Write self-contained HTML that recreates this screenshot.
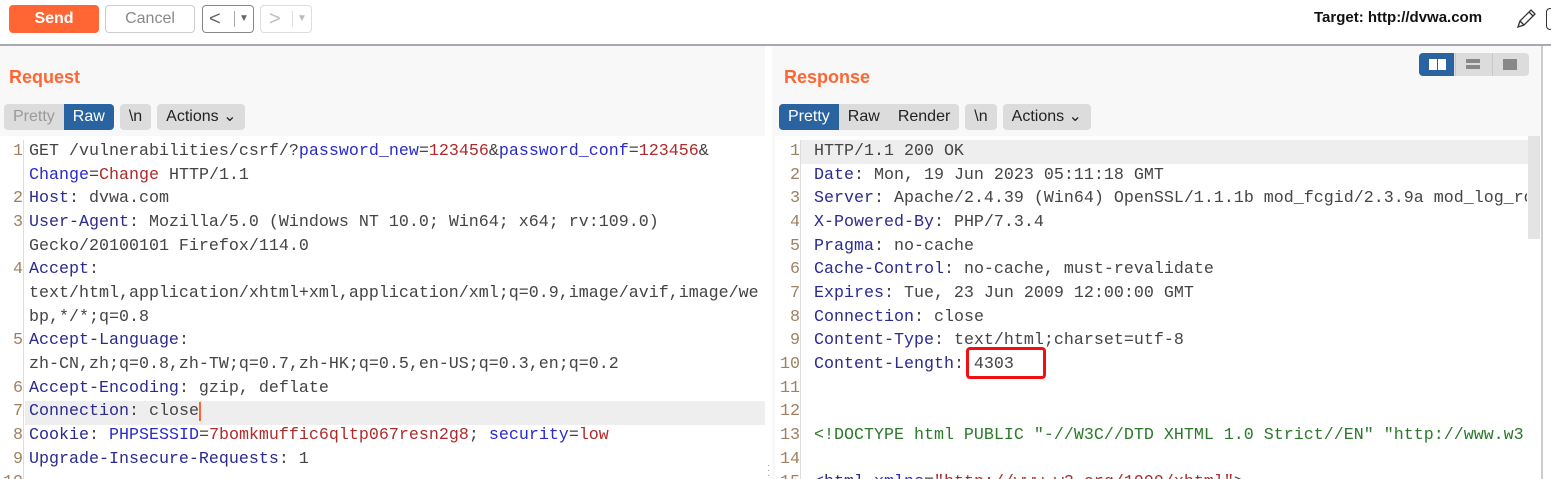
<!DOCTYPE html>
<html style="width:1551px;height:479px;overflow:hidden"><head><meta charset="utf-8"><style>
*{margin:0;padding:0;box-sizing:border-box}
body{width:1551px;height:479px;overflow:hidden;background:#fff;font-family:"Liberation Sans",sans-serif;position:relative}
.abs{position:absolute}
.btn{position:absolute;border-radius:4px;font-size:16px;text-align:center}
.panel{position:absolute;top:46px;height:433px;background:#f8f8f8;overflow:hidden}
.title{position:absolute;top:21px;left:9px;color:#ff6633;font-weight:bold;font-size:18px}
.tabs{position:absolute;top:58px;height:26px;font-size:16px;display:flex;gap:6px}
.grp{display:flex;background:#dcdcdc;border-radius:4px;overflow:hidden}
.grp span{padding:0 9px;line-height:26px;color:#222}
.grp span.on{background:#2a64a0;color:#fff}
.code{position:absolute;top:90px;bottom:0;background:#fff;font-family:"Liberation Mono",monospace;font-size:16.67px;color:#444;overflow:hidden}
.ln{position:absolute;left:0;top:4px;width:24px;text-align:right;color:#a08060;border-right:1px solid #ddd;height:340px}
.ln div,.tx div{height:23.67px;line-height:23.67px}
.tx{position:absolute;left:29px;top:4px;white-space:pre}
.k{color:#2a2a90}.p{color:#2a2acc}.v{color:#b02a2a}.g{color:#2a7a2a}
</style></head><body>
<div class="btn" style="left:9px;top:5px;width:90px;height:28px;background:#ff6633;color:#fff;font-weight:bold;line-height:28px">Send</div>
<div class="btn" style="left:105px;top:5px;width:90px;height:28px;border:1px solid #ccc;color:#888;line-height:26px">Cancel</div>
<div class="btn" style="left:202px;top:5px;width:52px;height:28px;border:1px solid #888;color:#666;line-height:26px;font-size:20px;text-align:left;padding-left:6px">&lt;<span style="position:absolute;left:31px;top:5px;height:16px;border-left:1px solid #aaa"></span><span style="position:absolute;left:36px;top:0;font-size:10px">▼</span></div>
<div class="btn" style="left:260px;top:5px;width:52px;height:28px;border:1px solid #ddd;color:#bbb;line-height:26px;font-size:20px;text-align:left;padding-left:8px">&gt;<span style="position:absolute;left:31px;top:5px;height:16px;border-left:1px solid #ddd"></span><span style="position:absolute;left:36px;top:0;font-size:10px">▼</span></div>
<div class="abs" style="left:1314px;top:9px;font-size:15px;font-weight:bold;color:#111">Target: http://dvwa.com</div>
<svg class="abs" style="left:1514px;top:7px" width="24" height="24" viewBox="0 0 24 24"><path d="M4 20l2-6L17 3l4 4L10 18z M6 14l4 4 M15 5l4 4" fill="none" stroke="#333" stroke-width="1.3"/></svg>
<div class="abs" style="left:1546px;top:8px;width:8px;height:22px;border:1.5px solid #333;border-radius:8px"></div>
<div class="abs" style="left:0;top:44px;width:1551px;height:2px;background:#a8a8b0"></div>

<div class="panel" style="left:0;width:765px">
<div class="title">Request</div>
<div class="tabs" style="left:4px"><div class="grp"><span style="color:#999">Pretty</span><span class="on">Raw</span></div><div class="grp"><span>\n</span></div><div class="grp"><span>Actions ⌄</span></div></div>
<div class="code" style="left:0;width:765px">
<div class="abs" style="left:25px;top:265px;width:740px;height:23.67px;background:#eee"></div>
<div class="ln"><div>1</div><div></div><div>2</div><div>3</div><div></div><div>4</div><div></div><div></div><div>5</div><div></div><div>6</div><div>7</div><div>8</div><div>9</div><div>10</div></div>
<div class="tx"><div>GET /vulnerabilities/csrf/?<span class="p">password_new</span>=<span class="v">123456</span>&amp;<span class="p">password_conf</span>=<span class="v">123456</span>&amp;</div><div><span class="p">Change</span>=<span class="v">Change</span> HTTP/1.1</div><div><span class="k">Host</span>: dvwa.com</div><div><span class="k">User-Agent</span>: Mozilla/5.0 (Windows NT 10.0; Win64; x64; rv:109.0)</div><div>Gecko/20100101 Firefox/114.0</div><div><span class="k">Accept</span>:</div><div>text/html,application/xhtml+xml,application/xml;q=0.9,image/avif,image/we</div><div>bp,*/*;q=0.8</div><div><span class="k">Accept-Language</span>:</div><div>zh-CN,zh;q=0.8,zh-TW;q=0.7,zh-HK;q=0.5,en-US;q=0.3,en;q=0.2</div><div><span class="k">Accept-Encoding</span>: gzip, deflate</div><div><span class="k">Connection</span>: close<span style="border-left:2px solid #ff6633"></span></div><div><span class="k">Cookie</span>: <span class="p">PHPSESSID</span>=<span class="v">7bomkmuffic6qltp067resn2g8</span>; <span class="p">security</span>=<span class="v">low</span></div><div><span class="k">Upgrade-Insecure-Requests</span>: 1</div></div>
</div></div>

<div class="panel" style="left:772px;width:769px">
<div class="title" style="left:12px">Response</div>
<div class="abs" style="left:647px;top:7px;width:110px;height:23px;background:#dcdcdc;border-radius:4px;overflow:hidden"><div class="abs" style="left:0;top:0;width:35px;height:23px;background:#2a64a0"></div><div class="abs" style="left:10px;top:6px;width:8px;height:11px;background:#fff"></div><div class="abs" style="left:19px;top:6px;width:8px;height:11px;background:#fff"></div><div class="abs" style="left:36px;top:0;width:1px;height:23px;background:#c8c8c8"></div><div class="abs" style="left:73px;top:0;width:1px;height:23px;background:#c8c8c8"></div><div class="abs" style="left:47px;top:6px;width:14px;height:4px;background:#888"></div><div class="abs" style="left:47px;top:12px;width:14px;height:4px;background:#888"></div><div class="abs" style="left:84px;top:6px;width:14px;height:11px;background:#888"></div></div>
<div class="tabs" style="left:7px"><div class="grp"><span class="on">Pretty</span><span>Raw</span><span>Render</span></div><div class="grp"><span>\n</span></div><div class="grp"><span>Actions ⌄</span></div></div>
<div class="code" style="left:3px;width:766px">
<div class="abs" style="left:25px;top:4px;width:730px;height:23.67px;background:#eee"></div>
<div class="abs" style="left:753px;top:0;width:12px;height:103px;background:#e4e4e4"></div>
<div class="ln" style="width:26px"><div>1</div><div>2</div><div>3</div><div>4</div><div>5</div><div>6</div><div>7</div><div>8</div><div>9</div><div>10</div><div>11</div><div>12</div><div>13</div><div>14</div><div>15</div></div>
<div class="tx" style="left:39px;width:713px;overflow:hidden"><div>HTTP/1.1 200 OK</div><div><span class="k">Date</span>: Mon, 19 Jun 2023 05:11:18 GMT</div><div><span class="k">Server</span>: Apache/2.4.39 (Win64) OpenSSL/1.1.1b mod_fcgid/2.3.9a mod_log_rotate</div><div><span class="k">X-Powered-By</span>: PHP/7.3.4</div><div><span class="k">Pragma</span>: no-cache</div><div><span class="k">Cache-Control</span>: no-cache, must-revalidate</div><div><span class="k">Expires</span>: Tue, 23 Jun 2009 12:00:00 GMT</div><div><span class="k">Connection</span>: close</div><div><span class="k">Content-Type</span>: text/html;charset=utf-8</div><div><span class="k">Content-Length</span>: 4303</div><div></div><div></div><div class="g">&lt;!DOCTYPE html PUBLIC "-//W3C//DTD XHTML 1.0 Strict//EN" "http://www.w3.org</div><div></div><div><span class="k">&lt;html</span> <span class="p">xmlns</span>=<span class="v">"http://www.w3.org/1999/xhtml"</span>&gt;</div></div>
<div class="abs" style="left:191px;top:211px;width:80px;height:32px;border:3px solid #f01010;border-radius:4px"></div>
</div></div>
<div class="abs" style="left:1541px;top:46px;width:2px;height:433px;background:#ccc"></div>
<div class="abs" style="left:767px;top:463px;color:#999;font-size:10px;line-height:5px">·<br>·<br>·</div>
</body></html>
